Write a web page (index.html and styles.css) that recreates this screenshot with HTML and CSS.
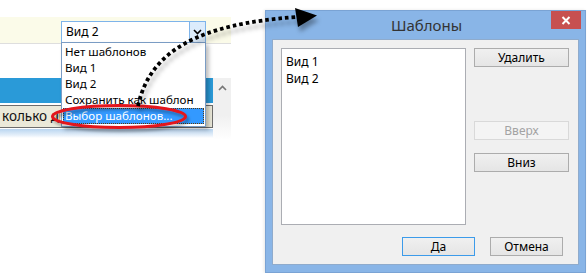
FILE: index.html
```html
<!DOCTYPE html>
<html lang="ru">
<head>
<meta charset="utf-8">
<title>Шаблоны</title>
<link rel="stylesheet" href="styles.css">
</head>
<body>
<div class="stage">
  <div class="app">
    <div class="app-top"></div>
    <div class="app-filter">
      <div class="combo">
        <span class="combo-value">Вид 2</span>
        <span class="combo-btn">
          <svg width="9" height="6" viewBox="0 0 9 6"><path d="M1 1 L4.5 4.5 L8 1" fill="none" stroke="#000" stroke-width="1.6"/></svg>
        </span>
      </div>
    </div>
    <div class="app-gap"></div>
    <div class="app-body">
      <div class="app-main">
        <div class="app-header"></div>
        <div class="app-row"><span class="app-row-text">колько дней</span></div>
        <div class="app-strip"></div>
      </div>
      <div class="app-scroll">
        <svg width="9" height="6" viewBox="0 0 9 6"><path d="M1 5 L4.5 1.5 L8 5" fill="none" stroke="#777" stroke-width="1.6"/></svg>
      </div>
    </div>
  </div>

  <ul class="dropdown">
    <li>Нет шаблонов</li>
    <li>Вид 1</li>
    <li>Вид 2</li>
    <li>Сохранить как шаблон</li>
    <li class="selected">Выбор шаблонов...</li>
  </ul>

  <div class="dialog">
    <div class="titlebar">
      <span></span>
      <span class="title">Шаблоны</span>
      <span class="close">
        <svg width="10" height="9" viewBox="0 0 10 9"><path d="M1.5 1 L8.5 8 M8.5 1 L1.5 8" stroke="#fff" stroke-width="2"/></svg>
      </span>
    </div>
    <div class="client">
      <div class="client-grid">
        <ul class="listbox">
          <li>Вид 1</li>
          <li>Вид 2</li>
        </ul>
        <div class="side-buttons">
          <button class="btn btn-delete">Удалить</button>
          <button class="btn btn-up" disabled>Вверх</button>
          <button class="btn btn-down">Вниз</button>
        </div>
      </div>
      <div class="bottom-buttons">
        <button class="btn btn-wide btn-default">Да</button>
        <button class="btn btn-wide">Отмена</button>
      </div>
    </div>
  </div>

  <svg class="overlay" width="587" height="273" viewBox="0 0 587 273">
    <defs>
      <filter id="shadow" x="-20%" y="-20%" width="140%" height="160%">
        <feDropShadow dx="2" dy="5" stdDeviation="2.2" flood-color="#000" flood-opacity="0.32"/>
      </filter>
      <filter id="shadow2" x="-20%" y="-50%" width="140%" height="200%">
        <feDropShadow dx="2" dy="3" stdDeviation="1.8" flood-color="#000" flood-opacity="0.3"/>
      </filter>
    </defs>
    <ellipse cx="119" cy="116.5" rx="66.5" ry="11" fill="none" stroke="#e3141f" stroke-width="3" filter="url(#shadow2)"/>
    <g filter="url(#shadow)">
      <path d="M138 106 C150 50, 200 24, 296 17" fill="none" stroke="#000" stroke-width="3.8" stroke-dasharray="3.6 3"/>
      <polygon points="295,8 317,15.5 298,27" fill="#000"/>
    </g>
  </svg>
</div>
</body>
</html>
```

FILE: styles.css
```css
* { box-sizing: border-box; }

html, body {
  margin: 0;
  padding: 0;
  background: #fff;
}

body {
  font-family: "Noto Sans", "Open Sans", sans-serif;
  font-size: 12px;
  color: #000;
}

.stage {
  position: relative;
  width: 587px;
  height: 273px;
  overflow: hidden;
  background: #fff;
}

/* ---------- background application ---------- */
.app {
  position: absolute;
  left: 0;
  top: 0;
  width: 232px;
  height: 150px;
  display: flex;
  flex-direction: column;
}

.app-top { height: 17px; }

.app-filter {
  height: 27px;
  width: 231px;
  background: #fbfbe9;
  border-bottom: 1px solid #dedede;
  padding: 4px 0 0 61px;
}

.combo {
  display: flex;
  width: 145px;
  height: 22px;
  border: 1px solid #7eb4ea;
  background: #fff;
}

.combo-value {
  flex: 1;
  padding-left: 4px;
  line-height: 20px;
  font-size: 12px;
}

.combo-btn {
  width: 16px;
  background: #dcecfc;
  border-left: 1px solid #7eb4ea;
  display: flex;
  align-items: center;
  justify-content: center;
}

.app-gap { height: 34px; }

.app-body {
  display: grid;
  grid-template-columns: 213px 18px;
}

.app-header {
  height: 25px;
  background: #2a9ad8;
}

.app-row {
  height: 23px;
  margin-top: 2px;
  background: #ebe9d9;
  border-top: 1px solid #6d6d6d;
  border-bottom: 1px solid #6d6d6d;
  border-right: 1px solid #6d6d6d;
  font-size: 13.5px;
  line-height: 20px;
  padding-left: 2px;
  color: #111;
}

.app-row-text {
  display: inline-block;
  width: 58px;
  white-space: nowrap;
  overflow: hidden;
  vertical-align: top;
}

.app-strip {
  height: 9px;
  margin-top: 1px;
  background: linear-gradient(#b9d5f0, #e6f0fa 70%, #fff);
}

.app-scroll {
  background: linear-gradient(#f0f0f0 60%, #fff);
  display: flex;
  justify-content: center;
  padding-top: 7px;
  height: 62px;
}

/* ---------- dropdown list ---------- */
.dropdown {
  position: absolute;
  left: 61px;
  top: 42px;
  width: 145px;
  height: 85px;
  margin: 0;
  padding: 1px;
  list-style: none;
  background: #fff;
  border: 1px solid #7a9cc4;
  box-shadow: 3px 3px 4px rgba(0, 0, 0, 0.25);
  font-size: 11.6px;
}

.dropdown li {
  height: 16px;
  line-height: 15px;
  padding-left: 2px;
  white-space: nowrap;
}

.dropdown li.selected {
  background: #3399ff;
  color: #fff;
  outline: 1px dotted #5a3a10;
  outline-offset: -1px;
}

/* ---------- dialog ---------- */
.dialog {
  position: absolute;
  left: 265px;
  top: 10px;
  width: 321px;
  height: 263px;
  background: #89b5e7;
  border: 1px solid #7aa3d4;
  display: flex;
  flex-direction: column;
  box-shadow: -1px 0 3px rgba(0, 0, 0, 0.1);
}

.titlebar {
  height: 28px;
  display: grid;
  grid-template-columns: 1fr auto 1fr;
  align-items: center;
}

.title {
  font-size: 15px;
  color: #333;
  line-height: 28px;
  padding-left: 2px;
}

.close {
  justify-self: end;
  align-self: start;
  width: 30px;
  height: 18px;
  margin-right: 4px;
  background: #c75050;
  display: flex;
  align-items: center;
  justify-content: center;
}

.client {
  flex: 1;
  margin: 0 6px 7px 6px;
  background: #f0f0f0;
  border: 1px solid #8fabcc;
  padding: 8px 15px 0 8px;
}

.client-grid {
  display: grid;
  grid-template-columns: 185px 95px;
  column-gap: 8px;
}

.listbox {
  margin: 0;
  height: 177px;
  list-style: none;
  background: #fff;
  border: 1px solid #abadb3;
  padding: 4px 0 0 4px;
  color: #000;
}

.listbox li {
  line-height: 17px;
  height: 17px;
}

.side-buttons {
  display: flex;
  flex-direction: column;
}

.btn {
  height: 19px;
  padding: 0;
  margin: 0;
  font-family: "Noto Sans", "Open Sans", sans-serif;
  font-size: 12px;
  line-height: 16px;
  color: #000;
  border: 1px solid #acacac;
  background: linear-gradient(#f0f0f0, #e5e5e5);
  border-radius: 0;
}

.btn-up {
  margin-top: 54px;
  color: #a3a3a3;
  border-color: #d9d9d9;
  background: #f4f4f4;
}

.btn-down { margin-top: 13px; }

.bottom-buttons {
  display: flex;
  justify-content: flex-end;
  gap: 15px;
  margin-top: 12px;
}

.btn-wide { width: 73px; }

.btn-default {
  border-color: #3c9bea;
}

/* ---------- annotations ---------- */
.overlay {
  position: absolute;
  left: 0;
  top: 0;
  pointer-events: none;
}
```
